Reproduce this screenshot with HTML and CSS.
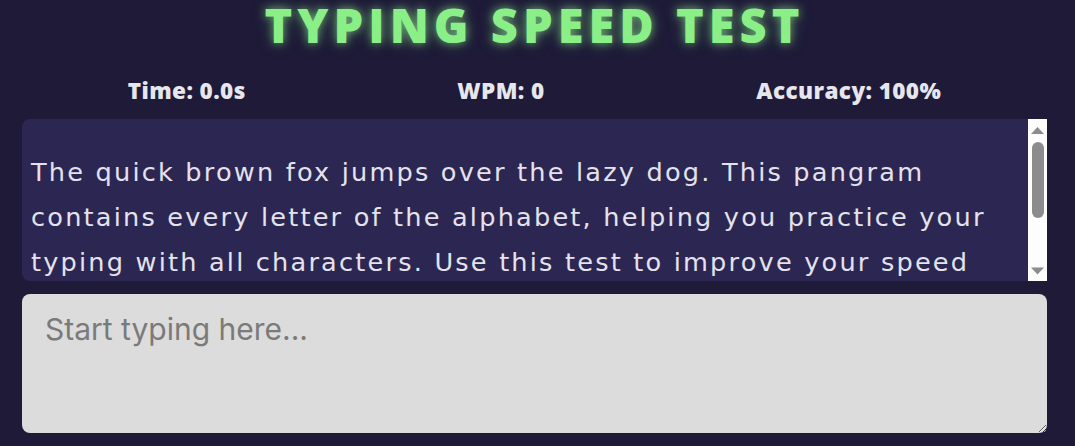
FILE: index.html
```html
<!DOCTYPE html>
<html lang="en">
<head>
<meta charset="utf-8">
<title>Typing Speed Test</title>
<link rel="stylesheet" href="styles.css">
</head>
<body>
<main class="app">
  <h1 class="title">TYPING SPEED TEST</h1>
  <div class="stats">
    <div class="stat">Time: 0.0s</div>
    <div class="stat">WPM: 0</div>
    <div class="stat">Accuracy: 100%</div>
  </div>
  <div class="passage">
    <p class="passage-text">The quick brown fox jumps over the lazy dog. This pangram contains every letter of the alphabet, helping you practice your typing with all characters. Use this test to improve your speed and accuracy over time. Keep your eyes on the screen and your fingers on the home row.</p>
    <div class="scrollbar" aria-hidden="true">
      <svg class="arrow" width="19" height="17" viewBox="0 0 19 17"><polygon points="3,15 9.5,8 16,15" fill="#8c8c8c"/></svg>
      <div class="track"><div class="thumb"></div></div>
      <svg class="arrow" width="19" height="17" viewBox="0 0 19 17"><polygon points="3,3.5 16,3.5 9.5,10.5" fill="#8c8c8c"/></svg>
    </div>
  </div>
  <textarea class="input" placeholder="Start typing here..."></textarea>
</main>
</body>
</html>
```
FILE: styles.css
```css
html, body {
  margin: 0;
  padding: 0;
  background: #1e1a38;
  height: 100%;
  overflow: hidden;
}

.app {
  margin-left: 22px;
  width: 1025px;
  display: flex;
  flex-direction: column;
  font-family: "Open Sans", "DejaVu Sans", sans-serif;
}

.title {
  margin: -4px 0 0 0;
  text-align: center;
  font-size: 47px;
  font-weight: 800;
  letter-spacing: 5px;
  color: #8bef88;
  text-shadow: 0 0 8px rgba(139, 239, 136, 0.6), 0 0 16px rgba(139, 239, 136, 0.35);
  line-height: 58px;
}

.stats {
  display: flex;
  justify-content: space-around;
  margin-top: 19px;
  height: 34px;
  align-items: center;
}

.stat {
  font-size: 22.5px;
  font-weight: 800;
  letter-spacing: 0.4px;
  color: #e6e6ec;
}

.passage {
  margin-top: 12px;
  height: 162px;
  background: #2c2752;
  border-radius: 8px 0 0 8px;
  overflow: hidden;
  display: flex;
}

.passage-text {
  flex: 1;
  margin: 0;
  padding: 31px 30px 10px 9px;
  font-family: "DejaVu Sans", sans-serif;
  font-size: 25.6px;
  line-height: 45px;
  letter-spacing: 2.2px;
  color: #e4e2ec;
}

.scrollbar {
  width: 19px;
  flex: none;
  background: #fdfdfd;
  display: flex;
  flex-direction: column;
}

.arrow {
  display: block;
  flex: none;
}

.track {
  flex: 1;
  padding: 6px 3px 0 4px;
}

.thumb {
  height: 76px;
  background: #8c8c8c;
  border-radius: 6px;
}

.input {
  margin-top: 13px;
  height: 139px;
  box-sizing: border-box;
  border: none;
  border-radius: 8px;
  background: #dcdcdc;
  padding: 17px 23px;
  font-family: "Inter", sans-serif;
  font-size: 30px;
  color: #333;
  resize: vertical;
  outline: none;
}

.input::placeholder {
  color: #7a7a7a;
}
```
